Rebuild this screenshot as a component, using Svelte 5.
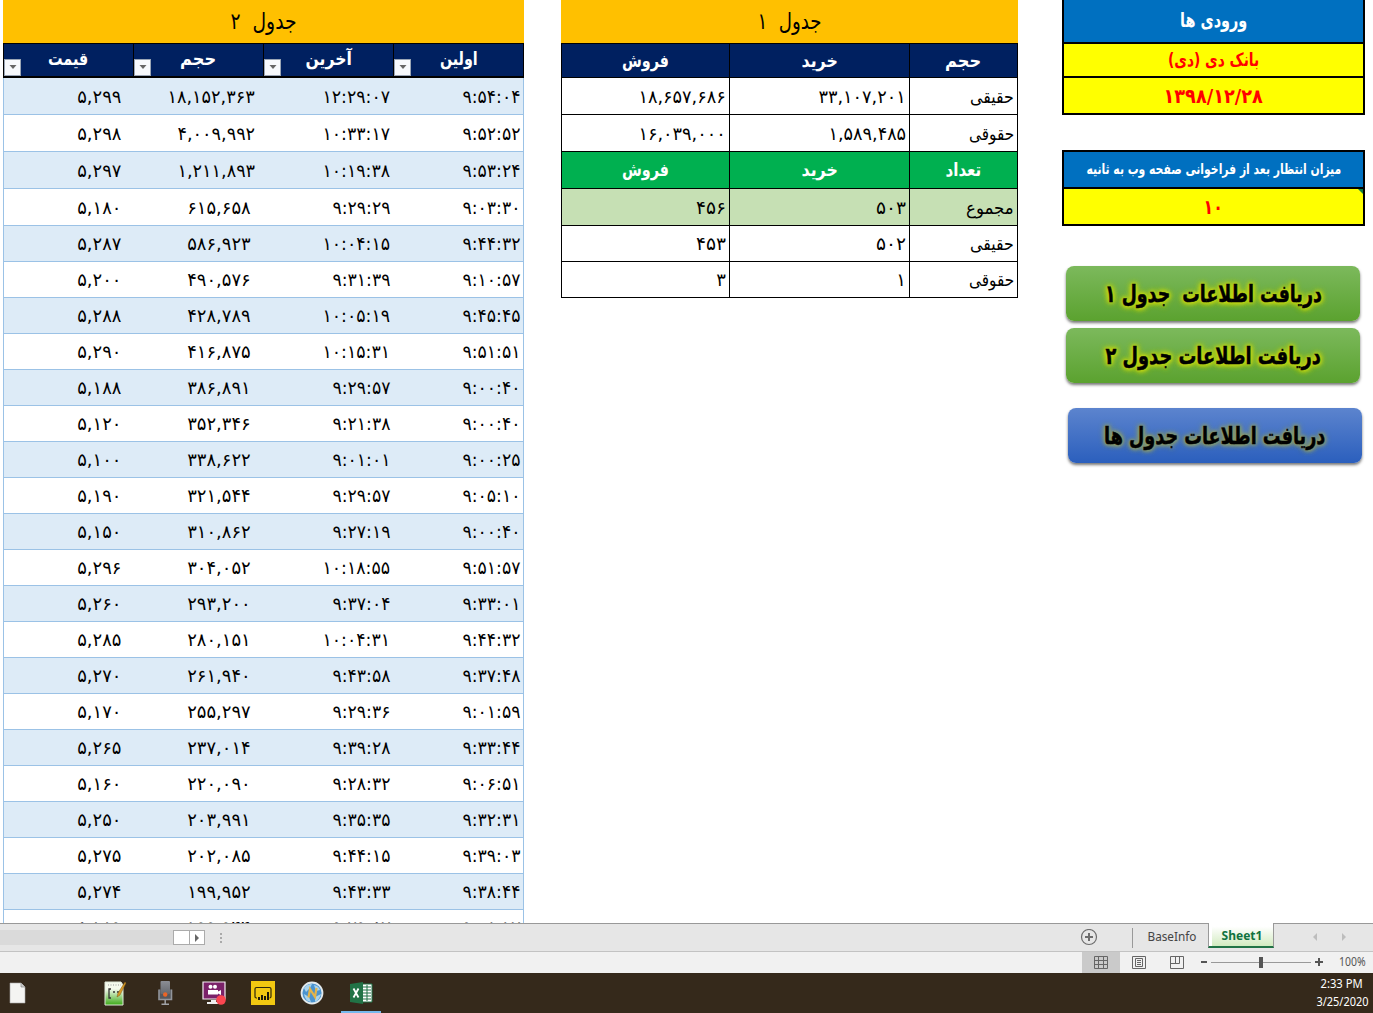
<script>
  const rows = [
    ['۵,۲۹۹', '۱۸,۱۵۲,۳۶۳', '۱۲:۲۹:۰۷', '۹:۵۴:۰۴'],
    ['۵,۲۹۸', '۴,۰۰۹,۹۹۲', '۱۰:۳۳:۱۷', '۹:۵۲:۵۲'],
    ['۵,۲۹۷', '۱,۲۱۱,۸۹۳', '۱۰:۱۹:۳۸', '۹:۵۳:۲۴'],
    ['۵,۱۸۰', '۶۱۵,۶۵۸', '۹:۲۹:۲۹', '۹:۰۳:۳۰'],
    ['۵,۲۸۷', '۵۸۶,۹۲۳', '۱۰:۰۴:۱۵', '۹:۴۴:۳۲'],
    ['۵,۲۰۰', '۴۹۰,۵۷۶', '۹:۳۱:۳۹', '۹:۱۰:۵۷'],
    ['۵,۲۸۸', '۴۲۸,۷۸۹', '۱۰:۰۵:۱۹', '۹:۴۵:۴۵'],
    ['۵,۲۹۰', '۴۱۶,۸۷۵', '۱۰:۱۵:۳۱', '۹:۵۱:۵۱'],
    ['۵,۱۸۸', '۳۸۶,۸۹۱', '۹:۲۹:۵۷', '۹:۰۰:۴۰'],
    ['۵,۱۲۰', '۳۵۲,۳۴۶', '۹:۲۱:۳۸', '۹:۰۰:۴۰'],
    ['۵,۱۰۰', '۳۳۸,۶۲۲', '۹:۰۱:۰۱', '۹:۰۰:۲۵'],
    ['۵,۱۹۰', '۳۲۱,۵۴۴', '۹:۲۹:۵۷', '۹:۰۵:۱۰'],
    ['۵,۱۵۰', '۳۱۰,۸۶۲', '۹:۲۷:۱۹', '۹:۰۰:۴۰'],
    ['۵,۲۹۶', '۳۰۴,۰۵۲', '۱۰:۱۸:۵۵', '۹:۵۱:۵۷'],
    ['۵,۲۶۰', '۲۹۳,۲۰۰', '۹:۳۷:۰۴', '۹:۳۳:۰۱'],
    ['۵,۲۸۵', '۲۸۰,۱۵۱', '۱۰:۰۴:۳۱', '۹:۴۴:۳۲'],
    ['۵,۲۷۰', '۲۶۱,۹۴۰', '۹:۴۳:۵۸', '۹:۳۷:۴۸'],
    ['۵,۱۷۰', '۲۵۵,۲۹۷', '۹:۲۹:۳۶', '۹:۰۱:۵۹'],
    ['۵,۲۶۵', '۲۳۷,۰۱۴', '۹:۳۹:۲۸', '۹:۳۳:۴۴'],
    ['۵,۱۶۰', '۲۲۰,۰۹۰', '۹:۲۸:۳۲', '۹:۰۶:۵۱'],
    ['۵,۲۵۰', '۲۰۳,۹۹۱', '۹:۳۵:۳۵', '۹:۳۲:۳۱'],
    ['۵,۲۷۵', '۲۰۲,۰۸۵', '۹:۴۴:۱۵', '۹:۳۹:۰۳'],
    ['۵,۲۷۴', '۱۹۹,۹۵۲', '۹:۴۳:۳۳', '۹:۳۸:۴۴'],
    ['۵,۱۸۹', '۱۹۹,۹۴۴', '۹:۲۹:۵۷', '۹:۰۸:۱۷']
  ];
  const heads = [['قیمت', 40], ['حجم', 36], ['آخرین', 46], ['اولین', 38]];
  const summary = [
    { kind: 'navy', cells: [['فروش', 47], ['خرید', 36], ['حجم', 36]] },
    { kind: 'plain', cells: ['۱۸,۶۵۷,۶۸۶', '۳۳,۱۰۷,۲۰۱', ['حقیقی', 44]] },
    { kind: 'plain', cells: ['۱۶,۰۳۹,۰۰۰', '۱,۵۸۹,۴۸۵', ['حقوقی', 45]] },
    { kind: 'green', cells: [['فروش', 47], ['خرید', 36], ['تعداد', 36]] },
    { kind: 'total', cells: ['۴۵۶', '۵۰۳', ['مجموع', 48]] },
    { kind: 'plain short', cells: ['۴۵۳', '۵۰۲', ['حقیقی', 44]] },
    { kind: 'plain short', cells: ['۳', '۱', ['حقوقی', 45]] }
  ];

  // Digits take ten pixels each, separators a little under four.
  function numWidth(s) {
    const p = (s.match(/[,:]/g) || []).length;
    return (s.length - p) * 10 + p * 3.8;
  }
  // Squeezes or stretches a label horizontally to the given width.
  function fit(node, width) {
    node.style.transform = `scaleX(${width / node.offsetWidth})`;
  }
</script>

{#snippet label(text, width)}<span class="fit" dir="rtl" use:fit={width}>{text}</span>{/snippet}
{#snippet num(text)}<span class="fit num" dir="ltr" use:fit={numWidth(text)}>{text}</span>{/snippet}

<div class="screen">
  <main class="sheet">
    <section class="trades">
      <div class="title">{@render label('جدول  ۲', 66)}</div>
      <div class="row head">
        {#each heads as [text, w]}
          <div class="cell">
            {@render label(text, w)}
            <span class="filter"><svg width="8" height="5" viewBox="0 0 8 5"><path d="M0.5 0h7L4 4z" fill="#666" /></svg></span>
          </div>
        {/each}
      </div>
      {#each rows as r, i}
        <div class="row data" class:tall={i < 4} class:band={i % 2 === 0}>
          {#each r as c, j}
            <div class="cell c{j}" class:wide={i < 3}>{@render num(c)}</div>
          {/each}
        </div>
      {/each}
    </section>

    <section class="summary">
      <div class="title">{@render label('جدول  ۱', 64)}</div>
      {#each summary as r}
        <div class="srow {r.kind}">
          {#each r.cells as c}
            <div class="scell">
              {#if typeof c === 'string'}{@render num(c)}{:else}{@render label(c[0], c[1])}{/if}
            </div>
          {/each}
        </div>
      {/each}
    </section>

    <aside class="inputs">
      <div class="box first">
        <div class="blue tallhead">{@render label('ورودی ها', 67)}</div>
        <div class="yellow bank">{@render label('بانک دی (دی)', 91)}</div>
        <div class="yellow date"><span class="fit" dir="ltr" use:fit={99}>۱۳۹۸/۱۲/۲۸</span></div>
      </div>
      <div class="box second">
        <div class="blue wait">{@render label('میزان انتظار بعد از فراخوانی صفحه وب به ثانیه', 255)}</div>
        <div class="yellow ten">{@render label('۱۰', 19)}<i class="corner"></i></div>
      </div>
      <div class="actions">
        <button class="green">{@render label('دریافت اطلاعات  جدول ۱', 217)}</button>
        <button class="green">{@render label('دریافت اطلاعات جدول ۲', 215)}</button>
        <button class="bluebtn">{@render label('دریافت اطلاعات جدول ها', 221)}</button>
      </div>
    </aside>
  </main>

  <nav class="tabs">
    <div class="track"></div>
    <div class="thumb"></div>
    <div class="arrow"><svg width="6" height="8" viewBox="0 0 6 8"><path d="M1 0v8l4-4z" fill="#666" /></svg></div>
    <svg class="dots" width="4" height="12" viewBox="0 0 4 12"><path d="M1 1h2v2H1zM1 5h2v2H1zM1 9h2v2H1z" fill="#aaa" /></svg>
    <svg class="plus" width="18" height="18" viewBox="0 0 18 18" fill="none" stroke="#6d6d6d"><circle cx="9" cy="8" r="7.5" stroke-width="1.2" /><path d="M9 4v8M5 8h8" stroke-width="2" /></svg>
    <div class="tab base"><span class="fit" use:fit={49}>BaseInfo</span></div>
    <div class="tab active"><span class="fit" use:fit={41}>Sheet1</span></div>
    <svg class="pager" width="36" height="12" viewBox="0 0 36 12"><path d="M5 1v8L1 5zM30 1v8l4-4z" fill="#bdbdbd" /></svg>
  </nav>

  <footer class="status">
    <div class="view on"><svg width="14" height="14" viewBox="0 0 14 14" fill="none" stroke="#666"><path d="M.5.5h13v12H.5zM4.500 0v13M9.500 0v13M0 4.500h14M0 8.500h14" /></svg></div>
    <div class="view"><svg width="14" height="14" viewBox="0 0 14 14" fill="none" stroke="#666"><path d="M.5.5h13v12H.5zM3.5 2.5h7v8h-7zM5 4.5h4M5 6.5h4M5 8.5h4" /></svg></div>
    <div class="view"><svg width="14" height="14" viewBox="0 0 14 14" fill="none" stroke="#666"><path d="M.5.5h13v12H.5zM.5 7.5h9v-7M5.500 0v7" /></svg></div>
    <svg class="zoom" width="124" height="14" viewBox="0 0 124 14"><path d="M1 6h6M115 6h8M119 2v8" stroke="#555" stroke-width="2" /><path d="M11 6.5h100" stroke="#999" /><path d="M59 1h4v11h-4z" fill="#555" /></svg>
    <span class="pct"><span class="fit" use:fit={27}>100%</span></span>
  </footer>

  <div class="taskbar">
    <svg class="icons" width="400" height="40" viewBox="0 0 400 40">
      <path d="M10 10h11l4 4v16H10z" fill="#f4f4f2" stroke="#aaa" stroke-width=".6" /><path d="M21 10v4h4" fill="#ccc" stroke="#888" stroke-width=".7" />
      <defs><linearGradient id="g" x2="0" y2="1"><stop offset=".3" stop-color="#f5faee" /><stop offset="1" stop-color="#3caa17" /></linearGradient>
        <linearGradient id="m" x2="0" y2="1"><stop stop-color="#8b8e95" /><stop offset="1" stop-color="#65686e" /></linearGradient></defs>
      <path d="M105 9h16l2 3v20h-18z" fill="url(#g)" stroke="#dfe8da" /><path d="M108 12h13" stroke="#999" stroke-dasharray="1 1.5" />
      <path d="M111 16h-2v9h2M113 19h2M117 19h2" fill="none" stroke="#333" stroke-width="1.3" /><path d="M125 9l-7 11-1 4 3-2 6-12z" fill="#d99b27" stroke="#7b5513" stroke-width=".5" />
      <path d="M159 16.500v10h12.500v-10" fill="#55585e" stroke="#92959b" stroke-width="1.600" /><rect x="160.500" y="8" width="9.500" height="13" rx="1" fill="url(#m)" /><circle cx="165.200" cy="21.500" r="2.200" fill="#ea6426" /><path d="M165.200 27v4M161.500 31.200h7.500" stroke="#a0a2a6" stroke-width="1.500" />
      <path d="M203 9h22v17h-22z" fill="#7b2269" stroke="#f5eef4" stroke-width="1.2" /><circle cx="210.500" cy="13.800" r="2" fill="#fff" /><circle cx="215" cy="13.800" r="2" fill="#fff" /><path d="M208 17h10v1.500l3-1.500v5l-3-1.500v1h-10z" fill="#fff" /><path d="M211 27h5v2h3v2h-12v-2h4z" fill="#eee" /><circle cx="221" cy="27" r="4.800" fill="#fb4650" />
      <path d="M251 8h24v24h-24z" fill="#f2c811" /><path d="M257 25h-.5q-1.500 0-1.500-1.500v-7.500q0-1.500 1.500-1.500h13q1.500 0 1.500 1.500v7.500q0 1.500-1.500 1.500" fill="none" stroke="#2d270c" stroke-width="1.200" /><path d="M259 27v-3M262 27v-5M265 27v-4M268 27v-8" stroke="#1d1a0a" stroke-width="2" />
      <circle cx="312" cy="20" r="10.500" fill="#4a93cf" stroke="#e2e9ec" stroke-width="1.800" /><path d="M304 15q3-4 8-4l-2 4-4 4zM314 12q5 1 6 5l-4 1zM315 24l6-3q-1 5-6 8zM304 21l5 3 2 5q-6-1-7-8z" fill="#a9d3ec" /><path d="M308.500 24.500l1.500-8.500 5 8 1.500-9" fill="none" stroke="#e3b44a" stroke-width="2.200" />
      <path d="M361 11h11v18h-11z" fill="#fff" stroke="#217346" /><path d="M363 14h8M363 17h8M363 20h8M363 23h8M363 26h8M367 12v16" stroke="#217346" stroke-width="1" /><path d="M350 11l13-2v22l-13-2z" fill="#217346" /><path d="M353.500 15.500l5 9M358.500 15.500l-5 9" stroke="#fff" stroke-width="1.800" />
      <path d="M341 38h40v2h-40z" fill="#76b9ed" />
    </svg>
    <div class="clock"><span class="fit" use:fit={42}>2:33 PM</span><span class="fit" use:fit={52}>3/25/2020</span></div>
  </div>
</div>

<style>
  :global(body) { background: #fff; overflow: hidden; }
  .screen { width: 1373px; height: 1013px; display: flex; flex-direction: column; overflow: hidden; background: #fff; font-family: "DejaVu Sans", sans-serif; color: #000; }
  .screen, .screen :global(*) { box-sizing: border-box; }
  .fit { display: inline-block; white-space: pre; flex: none; line-height: 1; }
  .sheet { height: 923px; flex: none; display: flex; overflow: hidden; padding-left: 3px; align-items: flex-start; }
  .title { height: 43px; background: #ffc000; display: flex; align-items: center; justify-content: center; font-size: 23px; }
  .trades { width: 521px; flex: none; }
  .row { display: grid; grid-template-columns: repeat(4, 130px); }
  .head { height: 35px; background: #002060; border: 1px solid #000; border-bottom-width: 2px; color: #fff; font-size: 18px; font-weight: bold; }
  .head .cell { display: flex; justify-content: center; padding-top: 6px; position: relative; border-right: 1px solid #000; }
  .filter { position: absolute; left: 0; bottom: 0; width: 17px; height: 17px; background: #f7f9fc; border: 1px solid #9aa5b5; display: flex; align-items: center; justify-content: center; }
  .data { height: 36px; border: 1px solid #9bc2e6; border-top: 0; font-size: 18px; }
  .data.tall { height: 37px; }
  .band { background: #ddebf7; }
  .data .cell { display: flex; align-items: center; justify-content: flex-end; padding-top: 1px; }
  .num { transform-origin: right center; }
  .data .c0 { padding-right: 13px; }
  .data .c1 { padding-right: 13px; }
  .data .c1.wide { padding-right: 9px; }
  .data .c2, .data .c3 { padding-right: 4px; }
  .summary { width: 457px; margin-left: 37px; flex: none; }
  .srow { display: grid; grid-template-columns: 169px 180px 108px; height: 37px; font-size: 18px; }
  .scell { border-right: 1px solid #000; border-bottom: 1px solid #000; display: flex; align-items: center; justify-content: flex-end; padding: 1px 3px 0 0; }
  .scell:first-child { border-left: 1px solid #000; }
  .scell > .fit { transform-origin: right center; }
  .navy { height: 35px; background: #002060; color: #fff; font-weight: bold; }
  .green.srow { background: #00b050; color: #fff; font-weight: bold; }
  .navy .scell { border-top: 1px solid #000; }
  .navy .scell, .green .scell { justify-content: center; padding: 0; }
  .navy .scell > .fit, .green .scell > .fit { transform-origin: center; }
  .total { background: #c6e0b4; }
  .short { height: 36px; }
  .inputs { width: 303px; margin-left: 44px; flex: none; }
  .box { border: 2px solid #000; font-weight: bold; text-align: center; }
  .box > div { display: flex; align-items: center; justify-content: center; position: relative; }
  .first { border-top: 0; height: 115px; }
  .second { margin-top: 35px; height: 76px; }
  .blue { background: #0070c0; color: #fff; border-bottom: 2px solid #000; }
  .yellow { background: #ff0; color: #f00; }
  .tallhead { height: 44px; font-size: 20px; padding-bottom: 2px; }
  .bank { height: 34px; border-bottom: 2px solid #000; font-size: 18px; }
  .date { height: 35px; font-size: 20px; }
  .wait { height: 37px; font-size: 15px; }
  .ten { height: 35px; font-size: 20px; }
  .corner { position: absolute; right: 0; top: 0; border-top: 5px solid #107c41; border-left: 5px solid transparent; }
  .actions { display: flex; flex-direction: column; padding: 40px 0 0 4px; gap: 7px; }
  button { width: 294px; height: 55px; border: 0; border-radius: 8px; padding: 0; display: flex; align-items: center; justify-content: center; font: bold 24px "DejaVu Sans", sans-serif; color: #000; box-shadow: 0 2px 3px #0008; -webkit-text-stroke: .5px #000; }
  button.green { background: linear-gradient(#7cb95c, #5ba22f); text-shadow: 0 0 3px #bfd414, 0 0 5px #bfd414, 0 0 5px #bfd414, 0 0 7px #bfd414, 0 0 7px #bfd414, 0 0 9px #bfd414; }
  .bluebtn { margin: 18px 0 0 2px; background: linear-gradient(#5c84ce, #2b5fbd); text-shadow: 0 0 3px #8b9c6a, 0 0 5px #8b9c6a, 0 0 5px #8b9c6a, 0 0 7px #8b9c6a, 0 0 7px #8b9c6a; }
  .tabs, .status, .taskbar { font-family: "Noto Sans", sans-serif; }
  .tabs { height: 29px; flex: none; background: #e6e6e6; border-top: 1px solid #999; border-bottom: 1px solid #c3c3c3; display: flex; align-items: center; }
  .track { width: 173px; height: 15px; background: #dadada; }
  .thumb { width: 17px; height: 15px; background: #fff; border: 1px solid #ababab; }
  .arrow { width: 15px; height: 15px; background: #fff; border: 1px solid #ababab; border-left: 0; display: flex; align-items: center; justify-content: center; }
  .dots { margin-left: 14px; }
  .plus { margin-left: 857px; }
  .tab { display: flex; justify-content: center; align-items: center; font-size: 12px; color: #444; }
  .base { margin-left: 34px; width: 76px; height: 20px; border-left: 1px solid #999; padding: 0 0 2px 2px; }
  .active { align-self: flex-start; margin-top: -1px; width: 66px; height: 25px; background: linear-gradient(#fff 15%, #d2ebc0); border: 1px solid #999; border-top: 0; border-bottom: 2px solid #217346; color: #107240; font-weight: bold; box-shadow: inset 3px 0 #fff; padding: 3px 0 0 2px; }
  .pager { margin-left: 38px; }
  .status { height: 21px; flex: none; background: #f1f1f1; display: flex; align-items: center; padding-left: 1082px; }
  .view { width: 38px; height: 21px; display: flex; align-items: center; justify-content: center; }
  .view.on { background: #cacaca; }
  .zoom { margin-left: 4px; }
  .pct { margin-left: 10px; width: 36px; font-size: 12px; color: #555; text-align: center; padding-bottom: 3px; }
  .taskbar { height: 40px; flex: none; background: #35291b; display: flex; justify-content: space-between; }
  .icons { flex: none; }
  .clock { width: 62px; display: flex; flex-direction: column; align-items: center; gap: 6px; padding-top: 5px; color: #fff; font-size: 12px; }
</style>
